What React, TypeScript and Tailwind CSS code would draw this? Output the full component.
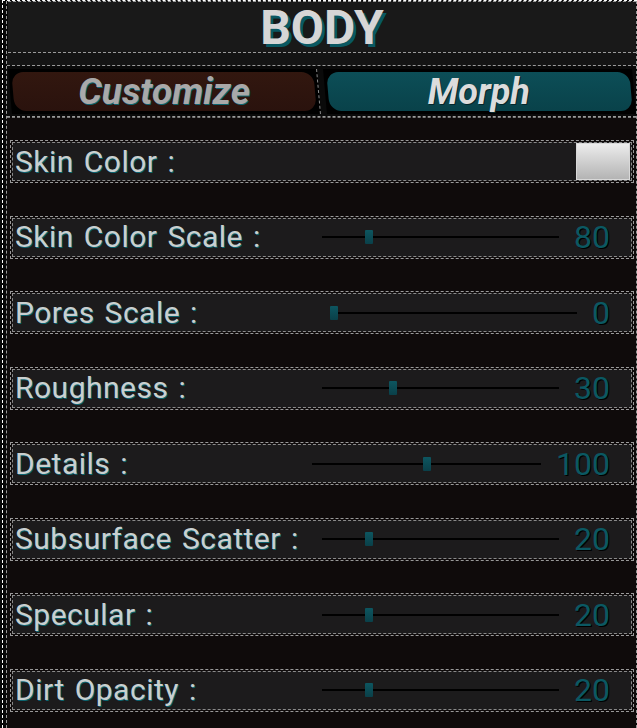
import React from "react";

type Row =
  | { label: string; kind: "color" }
  | { label: string; kind: "slider"; value: string; frac: number; lw: string };

const rows: Row[] = [
  { label: "Skin Color :", kind: "color" },
  { label: "Skin Color Scale :", kind: "slider", value: "80", frac: 0.2, lw: "w-[309px]" },
  { label: "Pores Scale :", kind: "slider", value: "0", frac: 0, lw: "w-[317px]" },
  { label: "Roughness :", kind: "slider", value: "30", frac: 0.3, lw: "w-[309px]" },
  { label: "Details :", kind: "slider", value: "100", frac: 0.5, lw: "w-[299px]" },
  { label: "Subsurface Scatter :", kind: "slider", value: "20", frac: 0.2, lw: "w-[309px]" },
  { label: "Specular :", kind: "slider", value: "20", frac: 0.2, lw: "w-[309px]" },
  { label: "Dirt Opacity :", kind: "slider", value: "20", frac: 0.2, lw: "w-[309px]" },
];

function Slider({ frac }: { frac: number }) {
  return (
    <div className="relative flex-1 h-[14px] flex items-center">
      <div className="w-full h-[2px] bg-black" />
      <div
        className="absolute top-0 w-[8px] h-[14px] bg-gradient-to-b from-[#0d5660] to-[#0a4049] rounded-[1px]"
        style={{ left: `calc(${frac * 100}% - ${frac === 0 ? 0 : 4}px)` }}
      />
    </div>
  );
}

const labelCls =
  "pl-[2px] text-[30px] tracking-[0.5px] [word-spacing:2px] leading-none text-[#c9d0d0] [text-shadow:1px_1px_0_#0b6470] whitespace-nowrap";

function RowView({ row }: { row: Row }) {
  return (
    <div className="h-[43px] ml-[3px] mr-[2px] border border-dashed border-[#9a9a9a] p-px">
      <div className="h-full border border-dashed border-[#8a8a8a] bg-[#1c1b1c] flex items-center">
        {row.kind === "color" ? (
          <>
            <div className={`flex-1 ${labelCls}`}>{row.label}</div>
            <div className="w-[54px] h-[37px] mr-px bg-gradient-to-b from-[#ececec] to-[#b4b4b4] border border-[#d8d8d8]" />
          </>
        ) : (
          <>
            <div className={`${row.lw} shrink-0 ${labelCls}`}>{row.label}</div>
            <Slider frac={row.frac} />
            <div className="ml-[15px] mr-[21px] text-[32px] leading-none text-[#0b5862] [text-shadow:1px_1px_0_#000000]">
              {row.value}
            </div>
          </>
        )}
      </div>
    </div>
  );
}

export default function App() {
  return (
    <div className="w-[637px] h-[728px] bg-[#080808] overflow-hidden font-['Roboto',sans-serif]">
      <div className="h-full ml-[2px] border-l border-t border-dashed border-white pl-[3px]">
        <div className="h-full border-l border-r border-dashed border-[#9a9a9a] flex flex-col">
          {/* Header */}
          <div className="h-[52px] ml-px bg-[#191919] border-t border-b border-dashed border-[#9a9a9a] flex items-center justify-center shrink-0">
            <span className="text-[48px] font-bold leading-none text-[#d6d6d6] [text-shadow:3px_3px_0_#0a5862] pt-[2px]">
              BODY
            </span>
          </div>
          {/* Strip */}
          <div className="h-[13px] bg-[#141414] border-b border-dashed border-[#9a9a9a] shrink-0" />
          {/* Tabs */}
          <div className="h-[51px] bg-[#0a0a0a] flex gap-[6px] px-[3px] pt-[3px] pb-[2px] border-b border-dashed border-[#9a9a9a] shrink-0">
            <div className="relative flex-1 flex items-center justify-center">
              <div className="absolute inset-0 skew-x-[5deg] bg-black border-r border-dashed border-[#8a8a8a] p-[3px]">
                <div className="w-full h-full rounded-[12px] bg-gradient-to-b from-[#32170f] to-[#2a120d]" />
              </div>
              <span className="relative text-[37px] font-bold italic leading-none text-[#a9a9a9] [text-shadow:1px_1px_0_#0b6470]">
                Customize
              </span>
            </div>
            <div className="relative flex-1 flex items-center justify-center">
              <div className="absolute inset-0 skew-x-[5deg] bg-black p-[3px]">
                <div className="w-full h-full rounded-[12px] bg-gradient-to-b from-[#0c4e57] to-[#09424a]" />
              </div>
              <span className="relative text-[36px] font-bold italic leading-none text-[#dcdcdc] [text-shadow:1px_1px_0_#05262b]">
                Morph
              </span>
            </div>
          </div>
          {/* Rows */}
          <div className="flex-1 bg-[#0f0b0b] border-t border-dashed border-[#7a7a7a] pt-[22px] flex flex-col gap-[32.5px]">
            {rows.map((r) => (
              <RowView key={r.label} row={r} />
            ))}
          </div>
        </div>
      </div>
    </div>
  );
}
